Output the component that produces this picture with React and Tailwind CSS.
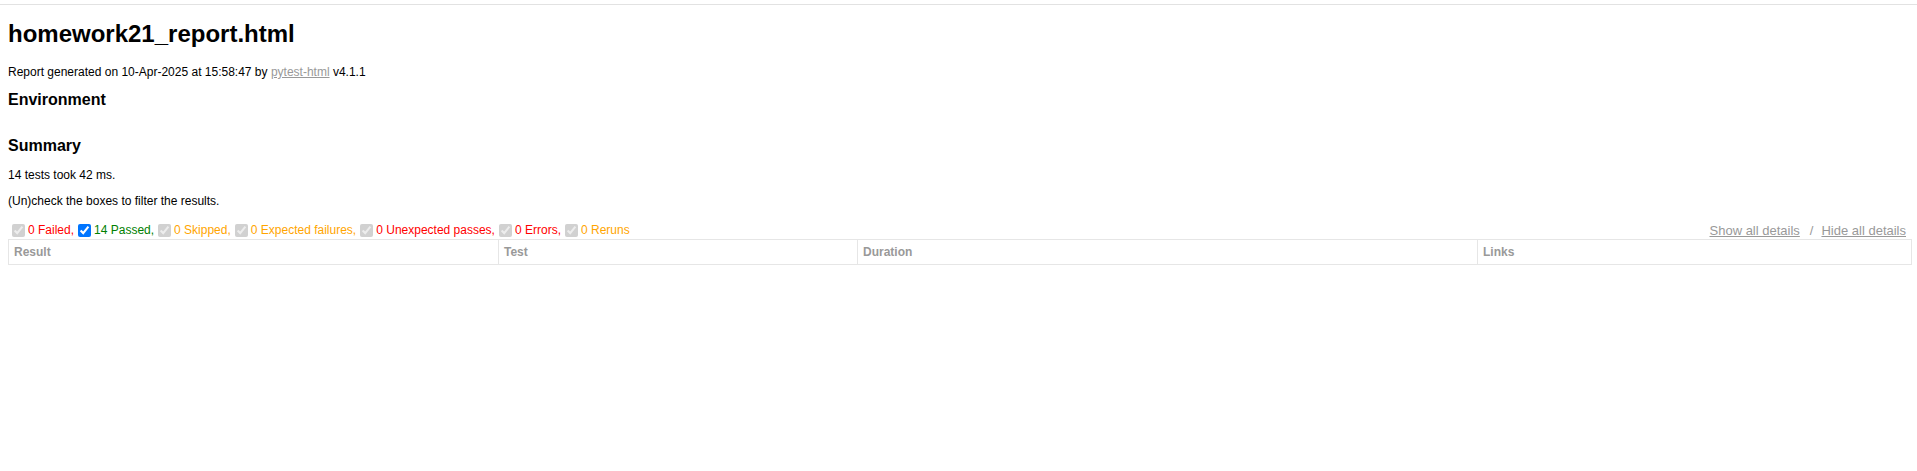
import React from "react";

const filters = [
  { label: "0 Failed,", color: "text-[#ff0000]", on: false },
  { label: "14 Passed,", color: "text-[#008000]", on: true },
  { label: "0 Skipped,", color: "text-[#ffa500]", on: false },
  { label: "0 Expected failures,", color: "text-[#ffa500]", on: false },
  { label: "0 Unexpected passes,", color: "text-[#ff0000]", on: false },
  { label: "0 Errors,", color: "text-[#ff0000]", on: false },
  { label: "0 Reruns", color: "text-[#ffa500]", on: false },
];

export default function App() {
  return (
    <div
      className="min-h-[471px] w-full bg-white text-[12px] text-[#999]"
      style={{ fontFamily: '"Liberation Sans", Arial, Helvetica, sans-serif' }}
    >
      <div className="h-[4px]" />
      <div className="h-px w-full bg-[#e2e2e2]" />
      <div className="pl-[8px] pr-[5px]">
        <h1 className="mt-[15px] text-[24px] font-bold leading-[28px] text-black">
          homework21_report.html
        </h1>
        <p className="mt-[17px] leading-[14px] text-black">
          Report generated on 10-Apr-2025 at 15:58:47 by{" "}
          <a href="#" className="text-[#999] underline">
            pytest-html
          </a>{" "}
          v4.1.1
        </p>
        <h2 className="mt-[12px] text-[16px] font-bold leading-[18px] text-black">
          Environment
        </h2>
        <h2 className="mt-[28px] text-[16px] font-bold leading-[18px] text-black">
          Summary
        </h2>
        <p className="mt-[13px] leading-[14px] text-black">14 tests took 42 ms.</p>
        <p className="mt-[12px] leading-[14px] text-black">
          (Un)check the boxes to filter the results.
        </p>
        <div className="mt-[15px] flex h-[14px] items-center justify-between leading-[14px]">
          <div className="flex items-center">
            {filters.map((f, i) => (
              <React.Fragment key={i}>
                <input
                  type="checkbox"
                  checked
                  readOnly
                  disabled={!f.on}
                  className="ml-[4px] mr-[3px] h-[13px] w-[13px]"
                />
                <span className={`${f.color} whitespace-pre`}>{f.label}</span>
              </React.Fragment>
            ))}
          </div>
          <div className="mr-[6px] flex items-center whitespace-pre text-[13px] leading-[15px] text-[#999]">
            <a href="#" className="underline">Show all details</a>
            <span className="ml-[10px] mr-[8px]">/</span>
            <a href="#" className="underline">Hide all details</a>
          </div>
        </div>
        <div className="mt-[2px] flex border border-[#e6e6e6] font-bold leading-[14px] text-[#999]">
          <div className="w-[489px] p-[5px]">Result</div>
          <div className="w-[359px] border-l border-[#e6e6e6] p-[5px]">Test</div>
          <div className="w-[620px] border-l border-[#e6e6e6] p-[5px]">Duration</div>
          <div className="w-[434px] border-l border-[#e6e6e6] p-[5px]">Links</div>
        </div>
      </div>
    </div>
  );
}
